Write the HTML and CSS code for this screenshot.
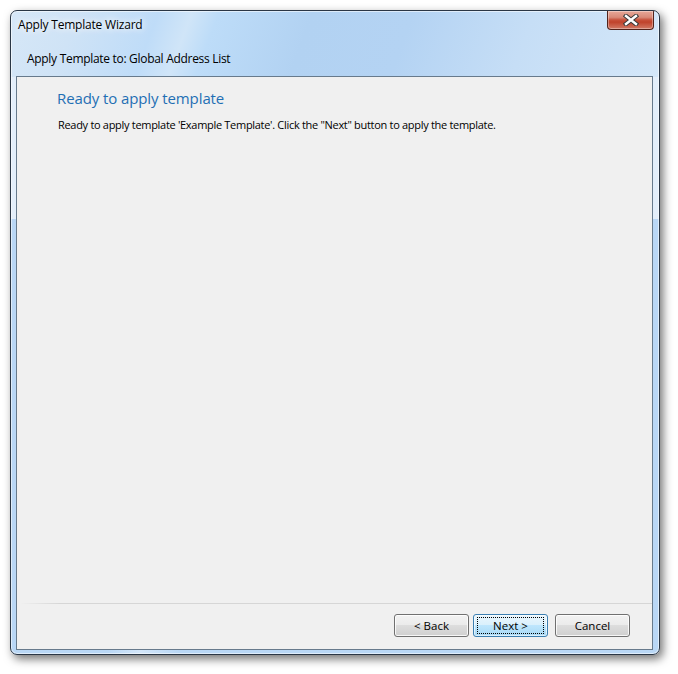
FILE: index.html
```html
<!DOCTYPE html>
<html>
<head>
<meta charset="utf-8">
<link rel="stylesheet" href="styles.css">
</head>
<body>
<div class="window">
  <div class="titlebar">
    <span class="title">Apply Template Wizard</span>
    <div class="close">
      <svg width="16" height="12" viewBox="0 0 16 12">
        <path d="M3 2 L13 10 M13 2 L3 10" stroke="#3a3a3a" stroke-width="4.4" stroke-linecap="square" fill="none"/>
        <path d="M3 2 L13 10 M13 2 L3 10" stroke="#ffffff" stroke-width="2.4" stroke-linecap="square" fill="none"/>
      </svg>
    </div>
  </div>
  <div class="subtitle">Apply Template to: Global Address List</div>
  <div class="client">
    <div class="page">
      <div class="heading">Ready to apply template</div>
      <div class="text">Ready to apply template 'Example Template'. Click the "Next" button to apply the template.</div>
    </div>
    <div class="separator"></div>
    <div class="buttons">
      <div class="btn">&lt; Back</div>
      <div class="btn default"><span class="focus">Next &gt;</span></div>
      <div class="btn cancel">Cancel</div>
    </div>
  </div>
</div>
</body>
</html>
```

FILE: styles.css
```css
html, body {
  margin: 0;
  padding: 0;
  background: #ffffff;
}
body {
  width: 678px;
  height: 674px;
  overflow: hidden;
  font-family: "Open Sans", "Noto Sans", sans-serif;
  font-size: 12px;
  color: #000;
}
.window {
  margin: 10px 0 0 10px;
  width: 648px;
  height: 643px;
  border: 1px solid #2a3645;
  border-radius: 7px;
  box-shadow: 3px 4px 10px rgba(0,0,0,0.55), inset 0 0 0 1px rgba(255,255,255,0.55);
  background:
    linear-gradient(110deg, #d6e7f7 0%, #cfe3f6 10%, #bfdcf8 22%, #d0e5f8 27%, #bddcf8 31%, #b2d2f2 45%, #b4d3f3 60%, #c6def6 78%, #d4e7f9 100%) top left / 100% 66px no-repeat,
    linear-gradient(100deg, #b9d7f5 0%, #b9d7f5 15%, #d3e6f9 20%, #b9d7f5 26%, #b9d7f5 100%) bottom left / 100% 6px no-repeat,
    linear-gradient(to bottom, #e3eefa 0, #e3eefa 208px, #b9d7f6 208px);
  display: flex;
  flex-direction: column;
  overflow: hidden;
}
.titlebar {
  display: flex;
  justify-content: space-between;
  align-items: flex-start;
  height: 30px;
}
.title {
  margin: 6px 0 0 7px;
  line-height: 16px;
  font-size: 12px;
  letter-spacing: -0.2px;
  text-shadow: 0 0 6px #ffffff, 0 0 10px #ffffff;
}
.close {
  margin-right: 5px;
  width: 45px;
  height: 18px;
  border: 1px solid #52231b;
  border-top: none;
  border-radius: 0 0 4px 4px;
  background: linear-gradient(to bottom, #e8a898 0%, #d98a78 35%, #c7503a 50%, #c0432c 62%, #d27a66 100%);
  box-shadow: inset 0 0 0 1px rgba(255,255,255,0.35);
  display: flex;
  align-items: center;
  justify-content: center;
}
.close svg {
  display: block;
}
.subtitle {
  margin: 10px 0 0 16px;
  line-height: 16px;
  height: 25px;
  font-size: 12px;
  letter-spacing: -0.3px;
}
.client {
  margin: 0 6px 0 5px;
  height: 572px;
  border: 1px solid #677a8c;
  background: #f0f0f0;
  display: flex;
  flex-direction: column;
}
.page {
  height: 526px;
  padding: 0 0 0 40px;
  box-sizing: border-box;
}
.heading {
  margin-top: 11px;
  font-size: 15px;
  line-height: 20px;
  letter-spacing: -0.1px;
  color: #1f6fb4;
}
.text {
  margin: 9px 0 0 1px;
  font-size: 11px;
  line-height: 16px;
  letter-spacing: -0.3px;
}
.separator {
  height: 1px;
  margin-left: 3px;
  background: linear-gradient(to right, rgba(214,214,214,0) 0, #d6d6d6 40px, #d6d6d6 100%);
}
.buttons {
  display: flex;
  justify-content: flex-end;
  padding: 10px 22px 11px 0;
}
.btn {
  width: 73px;
  height: 21px;
  border: 1px solid #707070;
  border-radius: 3px;
  background: linear-gradient(to bottom, #f2f2f2 0%, #ebebeb 50%, #dddddd 50%, #cfcfcf 100%);
  box-shadow: inset 0 0 0 1px rgba(255,255,255,0.8);
  display: flex;
  align-items: center;
  justify-content: center;
  font-size: 11.5px;
  line-height: 16px;
}
.btn.default {
  margin-left: 4px;
  border-color: #3c7fb1;
  background: linear-gradient(to bottom, #eaf6fd 0%, #d9f0fc 50%, #bee6fd 50%, #a7d9f5 100%);
  box-shadow: inset 0 0 0 1px rgba(255,255,255,0.6);
}
.btn.default .focus {
  width: 65px;
  height: 15px;
  border: 1px dotted #000;
  display: flex;
  align-items: center;
  justify-content: center;
}
.btn.cancel {
  margin-left: 7px;
}
```
